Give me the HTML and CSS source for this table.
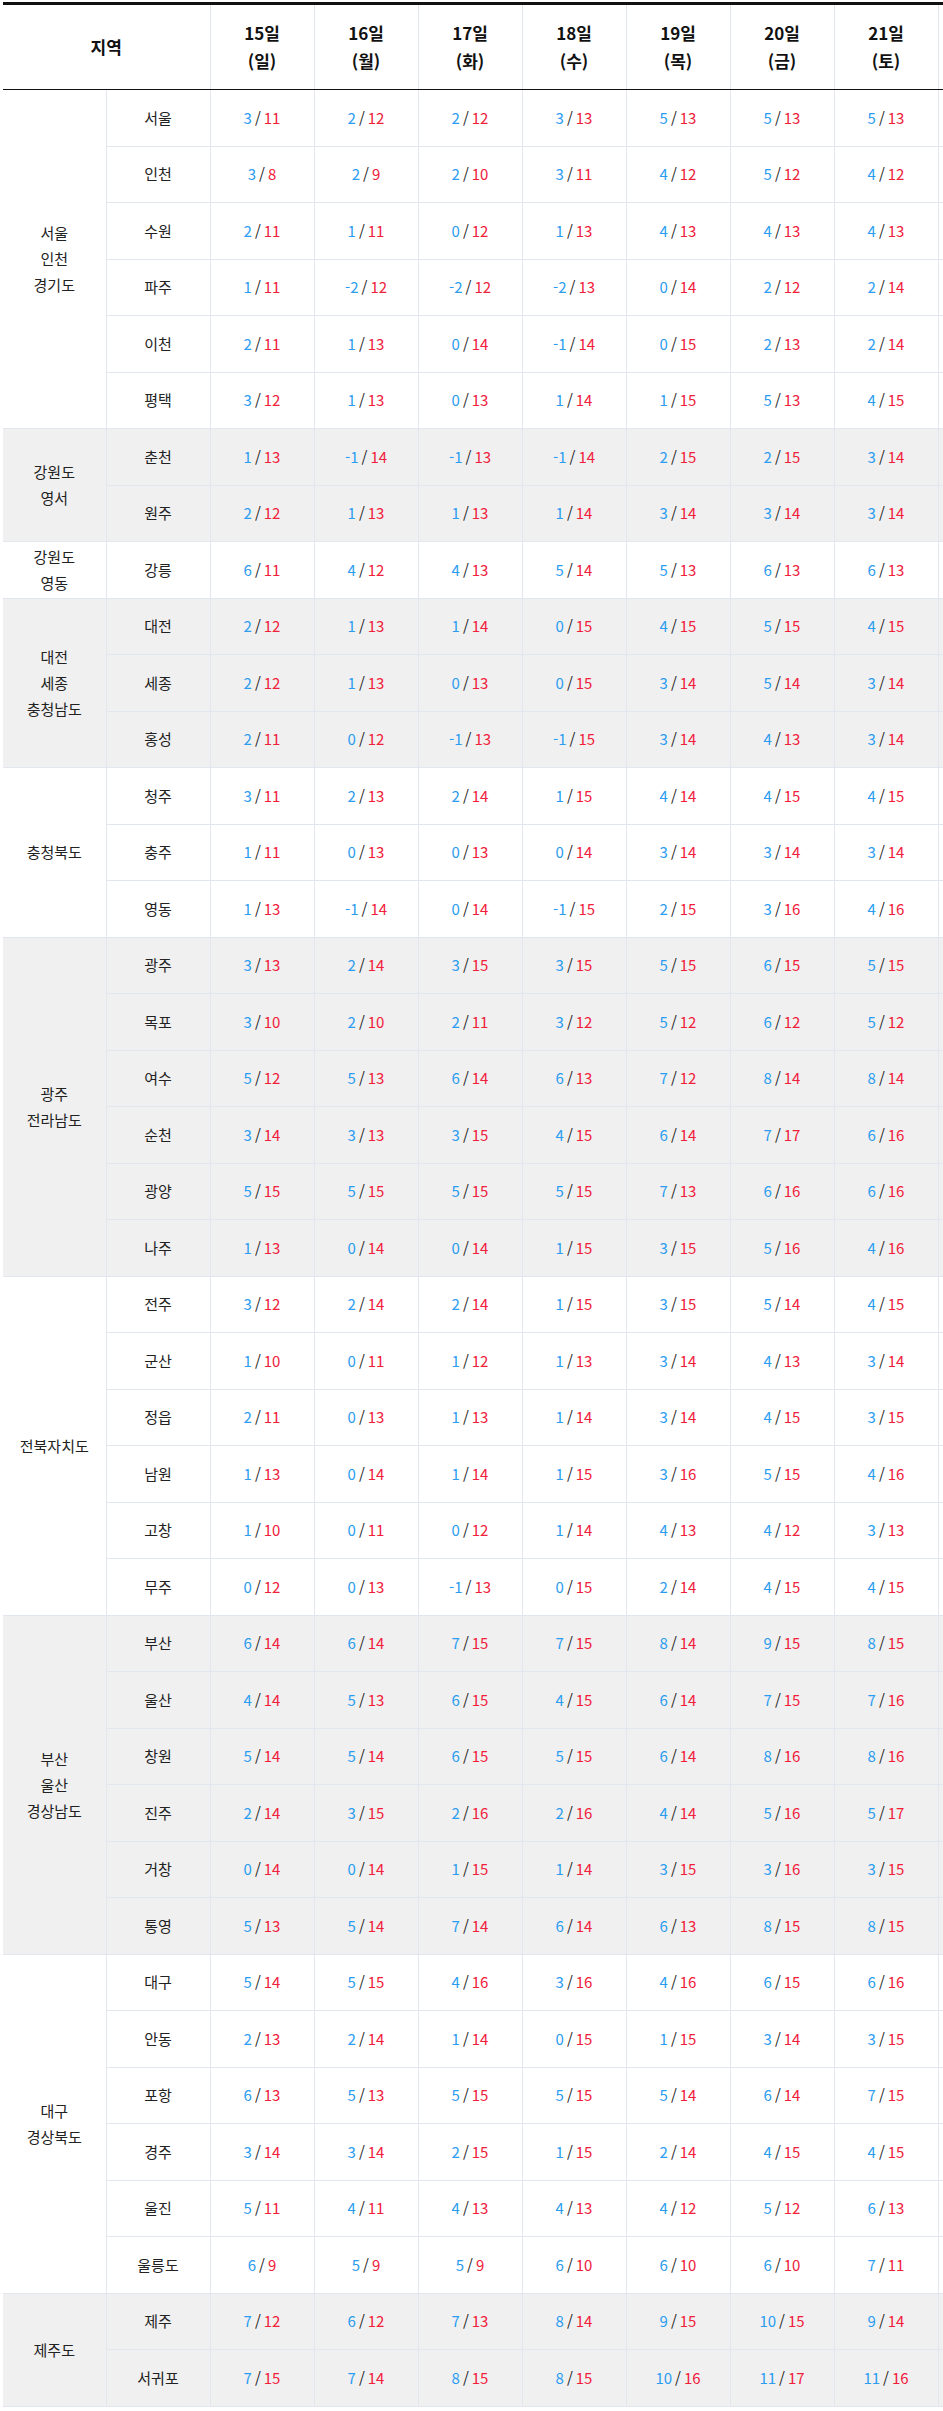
FILE: index.html
```html
<!DOCTYPE html>
<html lang="ko">
<head>
<meta charset="utf-8">
<title>지역별 기온</title>
<link rel="stylesheet" href="styles.css">
</head>
<body>
<div class="wrap">
<table class="tbl">
<colgroup>
<col class="c-region"><col class="c-city"><col class="c-day"><col class="c-day"><col class="c-day"><col class="c-day"><col class="c-day"><col class="c-day"><col class="c-day"><col class="c-day">
</colgroup>
<thead>
<tr>
<th colspan="2" class="h-area">지역</th>
<th>15일<br>(일)</th>
<th>16일<br>(월)</th>
<th>17일<br>(화)</th>
<th>18일<br>(수)</th>
<th>19일<br>(목)</th>
<th>20일<br>(금)</th>
<th>21일<br>(토)</th>
<th></th>
</tr>
</thead>

<tbody class="grp">
<tr><td class="region" rowspan="6">서울<br>인천<br>경기도</td><td class="city">서울</td>
<td><span class="lo">3</span>/<span class="hi">11</span></td><td><span class="lo">2</span>/<span class="hi">12</span></td><td><span class="lo">2</span>/<span class="hi">12</span></td><td><span class="lo">3</span>/<span class="hi">13</span></td><td><span class="lo">5</span>/<span class="hi">13</span></td><td><span class="lo">5</span>/<span class="hi">13</span></td><td><span class="lo">5</span>/<span class="hi">13</span></td><td></td></tr>
<tr><td class="city">인천</td>
<td><span class="lo">3</span>/<span class="hi">8</span></td><td><span class="lo">2</span>/<span class="hi">9</span></td><td><span class="lo">2</span>/<span class="hi">10</span></td><td><span class="lo">3</span>/<span class="hi">11</span></td><td><span class="lo">4</span>/<span class="hi">12</span></td><td><span class="lo">5</span>/<span class="hi">12</span></td><td><span class="lo">4</span>/<span class="hi">12</span></td><td></td></tr>
<tr><td class="city">수원</td>
<td><span class="lo">2</span>/<span class="hi">11</span></td><td><span class="lo">1</span>/<span class="hi">11</span></td><td><span class="lo">0</span>/<span class="hi">12</span></td><td><span class="lo">1</span>/<span class="hi">13</span></td><td><span class="lo">4</span>/<span class="hi">13</span></td><td><span class="lo">4</span>/<span class="hi">13</span></td><td><span class="lo">4</span>/<span class="hi">13</span></td><td></td></tr>
<tr><td class="city">파주</td>
<td><span class="lo">1</span>/<span class="hi">11</span></td><td><span class="lo">-2</span>/<span class="hi">12</span></td><td><span class="lo">-2</span>/<span class="hi">12</span></td><td><span class="lo">-2</span>/<span class="hi">13</span></td><td><span class="lo">0</span>/<span class="hi">14</span></td><td><span class="lo">2</span>/<span class="hi">12</span></td><td><span class="lo">2</span>/<span class="hi">14</span></td><td></td></tr>
<tr><td class="city">이천</td>
<td><span class="lo">2</span>/<span class="hi">11</span></td><td><span class="lo">1</span>/<span class="hi">13</span></td><td><span class="lo">0</span>/<span class="hi">14</span></td><td><span class="lo">-1</span>/<span class="hi">14</span></td><td><span class="lo">0</span>/<span class="hi">15</span></td><td><span class="lo">2</span>/<span class="hi">13</span></td><td><span class="lo">2</span>/<span class="hi">14</span></td><td></td></tr>
<tr><td class="city">평택</td>
<td><span class="lo">3</span>/<span class="hi">12</span></td><td><span class="lo">1</span>/<span class="hi">13</span></td><td><span class="lo">0</span>/<span class="hi">13</span></td><td><span class="lo">1</span>/<span class="hi">14</span></td><td><span class="lo">1</span>/<span class="hi">15</span></td><td><span class="lo">5</span>/<span class="hi">13</span></td><td><span class="lo">4</span>/<span class="hi">15</span></td><td></td></tr>
</tbody>

<tbody class="grp alt">
<tr><td class="region" rowspan="2">강원도<br>영서</td><td class="city">춘천</td>
<td><span class="lo">1</span>/<span class="hi">13</span></td><td><span class="lo">-1</span>/<span class="hi">14</span></td><td><span class="lo">-1</span>/<span class="hi">13</span></td><td><span class="lo">-1</span>/<span class="hi">14</span></td><td><span class="lo">2</span>/<span class="hi">15</span></td><td><span class="lo">2</span>/<span class="hi">15</span></td><td><span class="lo">3</span>/<span class="hi">14</span></td><td></td></tr>
<tr><td class="city">원주</td>
<td><span class="lo">2</span>/<span class="hi">12</span></td><td><span class="lo">1</span>/<span class="hi">13</span></td><td><span class="lo">1</span>/<span class="hi">13</span></td><td><span class="lo">1</span>/<span class="hi">14</span></td><td><span class="lo">3</span>/<span class="hi">14</span></td><td><span class="lo">3</span>/<span class="hi">14</span></td><td><span class="lo">3</span>/<span class="hi">14</span></td><td></td></tr>
</tbody>

<tbody class="grp">
<tr><td class="region">강원도<br>영동</td><td class="city">강릉</td>
<td><span class="lo">6</span>/<span class="hi">11</span></td><td><span class="lo">4</span>/<span class="hi">12</span></td><td><span class="lo">4</span>/<span class="hi">13</span></td><td><span class="lo">5</span>/<span class="hi">14</span></td><td><span class="lo">5</span>/<span class="hi">13</span></td><td><span class="lo">6</span>/<span class="hi">13</span></td><td><span class="lo">6</span>/<span class="hi">13</span></td><td></td></tr>
</tbody>

<tbody class="grp alt">
<tr><td class="region" rowspan="3">대전<br>세종<br>충청남도</td><td class="city">대전</td>
<td><span class="lo">2</span>/<span class="hi">12</span></td><td><span class="lo">1</span>/<span class="hi">13</span></td><td><span class="lo">1</span>/<span class="hi">14</span></td><td><span class="lo">0</span>/<span class="hi">15</span></td><td><span class="lo">4</span>/<span class="hi">15</span></td><td><span class="lo">5</span>/<span class="hi">15</span></td><td><span class="lo">4</span>/<span class="hi">15</span></td><td></td></tr>
<tr><td class="city">세종</td>
<td><span class="lo">2</span>/<span class="hi">12</span></td><td><span class="lo">1</span>/<span class="hi">13</span></td><td><span class="lo">0</span>/<span class="hi">13</span></td><td><span class="lo">0</span>/<span class="hi">15</span></td><td><span class="lo">3</span>/<span class="hi">14</span></td><td><span class="lo">5</span>/<span class="hi">14</span></td><td><span class="lo">3</span>/<span class="hi">14</span></td><td></td></tr>
<tr><td class="city">홍성</td>
<td><span class="lo">2</span>/<span class="hi">11</span></td><td><span class="lo">0</span>/<span class="hi">12</span></td><td><span class="lo">-1</span>/<span class="hi">13</span></td><td><span class="lo">-1</span>/<span class="hi">15</span></td><td><span class="lo">3</span>/<span class="hi">14</span></td><td><span class="lo">4</span>/<span class="hi">13</span></td><td><span class="lo">3</span>/<span class="hi">14</span></td><td></td></tr>
</tbody>

<tbody class="grp">
<tr><td class="region" rowspan="3">충청북도</td><td class="city">청주</td>
<td><span class="lo">3</span>/<span class="hi">11</span></td><td><span class="lo">2</span>/<span class="hi">13</span></td><td><span class="lo">2</span>/<span class="hi">14</span></td><td><span class="lo">1</span>/<span class="hi">15</span></td><td><span class="lo">4</span>/<span class="hi">14</span></td><td><span class="lo">4</span>/<span class="hi">15</span></td><td><span class="lo">4</span>/<span class="hi">15</span></td><td></td></tr>
<tr><td class="city">충주</td>
<td><span class="lo">1</span>/<span class="hi">11</span></td><td><span class="lo">0</span>/<span class="hi">13</span></td><td><span class="lo">0</span>/<span class="hi">13</span></td><td><span class="lo">0</span>/<span class="hi">14</span></td><td><span class="lo">3</span>/<span class="hi">14</span></td><td><span class="lo">3</span>/<span class="hi">14</span></td><td><span class="lo">3</span>/<span class="hi">14</span></td><td></td></tr>
<tr><td class="city">영동</td>
<td><span class="lo">1</span>/<span class="hi">13</span></td><td><span class="lo">-1</span>/<span class="hi">14</span></td><td><span class="lo">0</span>/<span class="hi">14</span></td><td><span class="lo">-1</span>/<span class="hi">15</span></td><td><span class="lo">2</span>/<span class="hi">15</span></td><td><span class="lo">3</span>/<span class="hi">16</span></td><td><span class="lo">4</span>/<span class="hi">16</span></td><td></td></tr>
</tbody>

<tbody class="grp alt">
<tr><td class="region" rowspan="6">광주<br>전라남도</td><td class="city">광주</td>
<td><span class="lo">3</span>/<span class="hi">13</span></td><td><span class="lo">2</span>/<span class="hi">14</span></td><td><span class="lo">3</span>/<span class="hi">15</span></td><td><span class="lo">3</span>/<span class="hi">15</span></td><td><span class="lo">5</span>/<span class="hi">15</span></td><td><span class="lo">6</span>/<span class="hi">15</span></td><td><span class="lo">5</span>/<span class="hi">15</span></td><td></td></tr>
<tr><td class="city">목포</td>
<td><span class="lo">3</span>/<span class="hi">10</span></td><td><span class="lo">2</span>/<span class="hi">10</span></td><td><span class="lo">2</span>/<span class="hi">11</span></td><td><span class="lo">3</span>/<span class="hi">12</span></td><td><span class="lo">5</span>/<span class="hi">12</span></td><td><span class="lo">6</span>/<span class="hi">12</span></td><td><span class="lo">5</span>/<span class="hi">12</span></td><td></td></tr>
<tr><td class="city">여수</td>
<td><span class="lo">5</span>/<span class="hi">12</span></td><td><span class="lo">5</span>/<span class="hi">13</span></td><td><span class="lo">6</span>/<span class="hi">14</span></td><td><span class="lo">6</span>/<span class="hi">13</span></td><td><span class="lo">7</span>/<span class="hi">12</span></td><td><span class="lo">8</span>/<span class="hi">14</span></td><td><span class="lo">8</span>/<span class="hi">14</span></td><td></td></tr>
<tr><td class="city">순천</td>
<td><span class="lo">3</span>/<span class="hi">14</span></td><td><span class="lo">3</span>/<span class="hi">13</span></td><td><span class="lo">3</span>/<span class="hi">15</span></td><td><span class="lo">4</span>/<span class="hi">15</span></td><td><span class="lo">6</span>/<span class="hi">14</span></td><td><span class="lo">7</span>/<span class="hi">17</span></td><td><span class="lo">6</span>/<span class="hi">16</span></td><td></td></tr>
<tr><td class="city">광양</td>
<td><span class="lo">5</span>/<span class="hi">15</span></td><td><span class="lo">5</span>/<span class="hi">15</span></td><td><span class="lo">5</span>/<span class="hi">15</span></td><td><span class="lo">5</span>/<span class="hi">15</span></td><td><span class="lo">7</span>/<span class="hi">13</span></td><td><span class="lo">6</span>/<span class="hi">16</span></td><td><span class="lo">6</span>/<span class="hi">16</span></td><td></td></tr>
<tr><td class="city">나주</td>
<td><span class="lo">1</span>/<span class="hi">13</span></td><td><span class="lo">0</span>/<span class="hi">14</span></td><td><span class="lo">0</span>/<span class="hi">14</span></td><td><span class="lo">1</span>/<span class="hi">15</span></td><td><span class="lo">3</span>/<span class="hi">15</span></td><td><span class="lo">5</span>/<span class="hi">16</span></td><td><span class="lo">4</span>/<span class="hi">16</span></td><td></td></tr>
</tbody>

<tbody class="grp">
<tr><td class="region" rowspan="6">전북자치도</td><td class="city">전주</td>
<td><span class="lo">3</span>/<span class="hi">12</span></td><td><span class="lo">2</span>/<span class="hi">14</span></td><td><span class="lo">2</span>/<span class="hi">14</span></td><td><span class="lo">1</span>/<span class="hi">15</span></td><td><span class="lo">3</span>/<span class="hi">15</span></td><td><span class="lo">5</span>/<span class="hi">14</span></td><td><span class="lo">4</span>/<span class="hi">15</span></td><td></td></tr>
<tr><td class="city">군산</td>
<td><span class="lo">1</span>/<span class="hi">10</span></td><td><span class="lo">0</span>/<span class="hi">11</span></td><td><span class="lo">1</span>/<span class="hi">12</span></td><td><span class="lo">1</span>/<span class="hi">13</span></td><td><span class="lo">3</span>/<span class="hi">14</span></td><td><span class="lo">4</span>/<span class="hi">13</span></td><td><span class="lo">3</span>/<span class="hi">14</span></td><td></td></tr>
<tr><td class="city">정읍</td>
<td><span class="lo">2</span>/<span class="hi">11</span></td><td><span class="lo">0</span>/<span class="hi">13</span></td><td><span class="lo">1</span>/<span class="hi">13</span></td><td><span class="lo">1</span>/<span class="hi">14</span></td><td><span class="lo">3</span>/<span class="hi">14</span></td><td><span class="lo">4</span>/<span class="hi">15</span></td><td><span class="lo">3</span>/<span class="hi">15</span></td><td></td></tr>
<tr><td class="city">남원</td>
<td><span class="lo">1</span>/<span class="hi">13</span></td><td><span class="lo">0</span>/<span class="hi">14</span></td><td><span class="lo">1</span>/<span class="hi">14</span></td><td><span class="lo">1</span>/<span class="hi">15</span></td><td><span class="lo">3</span>/<span class="hi">16</span></td><td><span class="lo">5</span>/<span class="hi">15</span></td><td><span class="lo">4</span>/<span class="hi">16</span></td><td></td></tr>
<tr><td class="city">고창</td>
<td><span class="lo">1</span>/<span class="hi">10</span></td><td><span class="lo">0</span>/<span class="hi">11</span></td><td><span class="lo">0</span>/<span class="hi">12</span></td><td><span class="lo">1</span>/<span class="hi">14</span></td><td><span class="lo">4</span>/<span class="hi">13</span></td><td><span class="lo">4</span>/<span class="hi">12</span></td><td><span class="lo">3</span>/<span class="hi">13</span></td><td></td></tr>
<tr><td class="city">무주</td>
<td><span class="lo">0</span>/<span class="hi">12</span></td><td><span class="lo">0</span>/<span class="hi">13</span></td><td><span class="lo">-1</span>/<span class="hi">13</span></td><td><span class="lo">0</span>/<span class="hi">15</span></td><td><span class="lo">2</span>/<span class="hi">14</span></td><td><span class="lo">4</span>/<span class="hi">15</span></td><td><span class="lo">4</span>/<span class="hi">15</span></td><td></td></tr>
</tbody>

<tbody class="grp alt">
<tr><td class="region" rowspan="6">부산<br>울산<br>경상남도</td><td class="city">부산</td>
<td><span class="lo">6</span>/<span class="hi">14</span></td><td><span class="lo">6</span>/<span class="hi">14</span></td><td><span class="lo">7</span>/<span class="hi">15</span></td><td><span class="lo">7</span>/<span class="hi">15</span></td><td><span class="lo">8</span>/<span class="hi">14</span></td><td><span class="lo">9</span>/<span class="hi">15</span></td><td><span class="lo">8</span>/<span class="hi">15</span></td><td></td></tr>
<tr><td class="city">울산</td>
<td><span class="lo">4</span>/<span class="hi">14</span></td><td><span class="lo">5</span>/<span class="hi">13</span></td><td><span class="lo">6</span>/<span class="hi">15</span></td><td><span class="lo">4</span>/<span class="hi">15</span></td><td><span class="lo">6</span>/<span class="hi">14</span></td><td><span class="lo">7</span>/<span class="hi">15</span></td><td><span class="lo">7</span>/<span class="hi">16</span></td><td></td></tr>
<tr><td class="city">창원</td>
<td><span class="lo">5</span>/<span class="hi">14</span></td><td><span class="lo">5</span>/<span class="hi">14</span></td><td><span class="lo">6</span>/<span class="hi">15</span></td><td><span class="lo">5</span>/<span class="hi">15</span></td><td><span class="lo">6</span>/<span class="hi">14</span></td><td><span class="lo">8</span>/<span class="hi">16</span></td><td><span class="lo">8</span>/<span class="hi">16</span></td><td></td></tr>
<tr><td class="city">진주</td>
<td><span class="lo">2</span>/<span class="hi">14</span></td><td><span class="lo">3</span>/<span class="hi">15</span></td><td><span class="lo">2</span>/<span class="hi">16</span></td><td><span class="lo">2</span>/<span class="hi">16</span></td><td><span class="lo">4</span>/<span class="hi">14</span></td><td><span class="lo">5</span>/<span class="hi">16</span></td><td><span class="lo">5</span>/<span class="hi">17</span></td><td></td></tr>
<tr><td class="city">거창</td>
<td><span class="lo">0</span>/<span class="hi">14</span></td><td><span class="lo">0</span>/<span class="hi">14</span></td><td><span class="lo">1</span>/<span class="hi">15</span></td><td><span class="lo">1</span>/<span class="hi">14</span></td><td><span class="lo">3</span>/<span class="hi">15</span></td><td><span class="lo">3</span>/<span class="hi">16</span></td><td><span class="lo">3</span>/<span class="hi">15</span></td><td></td></tr>
<tr><td class="city">통영</td>
<td><span class="lo">5</span>/<span class="hi">13</span></td><td><span class="lo">5</span>/<span class="hi">14</span></td><td><span class="lo">7</span>/<span class="hi">14</span></td><td><span class="lo">6</span>/<span class="hi">14</span></td><td><span class="lo">6</span>/<span class="hi">13</span></td><td><span class="lo">8</span>/<span class="hi">15</span></td><td><span class="lo">8</span>/<span class="hi">15</span></td><td></td></tr>
</tbody>

<tbody class="grp">
<tr><td class="region" rowspan="6">대구<br>경상북도</td><td class="city">대구</td>
<td><span class="lo">5</span>/<span class="hi">14</span></td><td><span class="lo">5</span>/<span class="hi">15</span></td><td><span class="lo">4</span>/<span class="hi">16</span></td><td><span class="lo">3</span>/<span class="hi">16</span></td><td><span class="lo">4</span>/<span class="hi">16</span></td><td><span class="lo">6</span>/<span class="hi">15</span></td><td><span class="lo">6</span>/<span class="hi">16</span></td><td></td></tr>
<tr><td class="city">안동</td>
<td><span class="lo">2</span>/<span class="hi">13</span></td><td><span class="lo">2</span>/<span class="hi">14</span></td><td><span class="lo">1</span>/<span class="hi">14</span></td><td><span class="lo">0</span>/<span class="hi">15</span></td><td><span class="lo">1</span>/<span class="hi">15</span></td><td><span class="lo">3</span>/<span class="hi">14</span></td><td><span class="lo">3</span>/<span class="hi">15</span></td><td></td></tr>
<tr><td class="city">포항</td>
<td><span class="lo">6</span>/<span class="hi">13</span></td><td><span class="lo">5</span>/<span class="hi">13</span></td><td><span class="lo">5</span>/<span class="hi">15</span></td><td><span class="lo">5</span>/<span class="hi">15</span></td><td><span class="lo">5</span>/<span class="hi">14</span></td><td><span class="lo">6</span>/<span class="hi">14</span></td><td><span class="lo">7</span>/<span class="hi">15</span></td><td></td></tr>
<tr><td class="city">경주</td>
<td><span class="lo">3</span>/<span class="hi">14</span></td><td><span class="lo">3</span>/<span class="hi">14</span></td><td><span class="lo">2</span>/<span class="hi">15</span></td><td><span class="lo">1</span>/<span class="hi">15</span></td><td><span class="lo">2</span>/<span class="hi">14</span></td><td><span class="lo">4</span>/<span class="hi">15</span></td><td><span class="lo">4</span>/<span class="hi">15</span></td><td></td></tr>
<tr><td class="city">울진</td>
<td><span class="lo">5</span>/<span class="hi">11</span></td><td><span class="lo">4</span>/<span class="hi">11</span></td><td><span class="lo">4</span>/<span class="hi">13</span></td><td><span class="lo">4</span>/<span class="hi">13</span></td><td><span class="lo">4</span>/<span class="hi">12</span></td><td><span class="lo">5</span>/<span class="hi">12</span></td><td><span class="lo">6</span>/<span class="hi">13</span></td><td></td></tr>
<tr><td class="city">울릉도</td>
<td><span class="lo">6</span>/<span class="hi">9</span></td><td><span class="lo">5</span>/<span class="hi">9</span></td><td><span class="lo">5</span>/<span class="hi">9</span></td><td><span class="lo">6</span>/<span class="hi">10</span></td><td><span class="lo">6</span>/<span class="hi">10</span></td><td><span class="lo">6</span>/<span class="hi">10</span></td><td><span class="lo">7</span>/<span class="hi">11</span></td><td></td></tr>
</tbody>

<tbody class="grp alt">
<tr><td class="region" rowspan="2">제주도</td><td class="city">제주</td>
<td><span class="lo">7</span>/<span class="hi">12</span></td><td><span class="lo">6</span>/<span class="hi">12</span></td><td><span class="lo">7</span>/<span class="hi">13</span></td><td><span class="lo">8</span>/<span class="hi">14</span></td><td><span class="lo">9</span>/<span class="hi">15</span></td><td><span class="lo">10</span>/<span class="hi">15</span></td><td><span class="lo">9</span>/<span class="hi">14</span></td><td></td></tr>
<tr><td class="city">서귀포</td>
<td><span class="lo">7</span>/<span class="hi">15</span></td><td><span class="lo">7</span>/<span class="hi">14</span></td><td><span class="lo">8</span>/<span class="hi">15</span></td><td><span class="lo">8</span>/<span class="hi">15</span></td><td><span class="lo">10</span>/<span class="hi">16</span></td><td><span class="lo">11</span>/<span class="hi">17</span></td><td><span class="lo">11</span>/<span class="hi">16</span></td><td></td></tr>
</tbody>
</table>
</div>
</body>
</html>
```

FILE: styles.css
```css
html, body {
  margin: 0;
  padding: 0;
  background: #ffffff;
}

body {
  font-family: "Noto Sans CJK KR", "Noto Sans", "Liberation Sans", sans-serif;
  color: #222222;
}

.wrap {
  width: 943px;
  overflow: hidden;
  padding-top: 2px;
}

.tbl {
  border-collapse: collapse;
  table-layout: fixed;
  width: 1039px;
  margin-left: 3px;
  border-top: 3px solid #111111;
}

.c-region { width: 103px; }
.c-city { width: 104px; }
.c-day { width: 104px; }

.tbl th {
  height: 84px;
  padding: 0;
  font-size: 17px;
  line-height: 28px;
  font-weight: 700;
  color: #111111;
  text-align: center;
  vertical-align: middle;
  border-left: 1px solid #e2e6ee;
  border-right: 1px solid #e2e6ee;
  border-bottom: 1px solid #111111;
}

.tbl th.h-area {
  border-left: 0;
}

.tbl td {
  height: 55.5px;
  padding: 0;
  font-size: 15px;
  line-height: 26px;
  text-align: center;
  vertical-align: middle;
  color: #222222;
  border: 1px solid #e2e6ee;
  white-space: nowrap;
}

.tbl td.region {
  border-left: 0;
}

.grp.alt td {
  background: #f0f0f0;
}

.lo {
  color: #2b9cf0;
  margin-right: 3px;
}

.hi {
  color: #f0203a;
  margin-left: 3px;
}
```
